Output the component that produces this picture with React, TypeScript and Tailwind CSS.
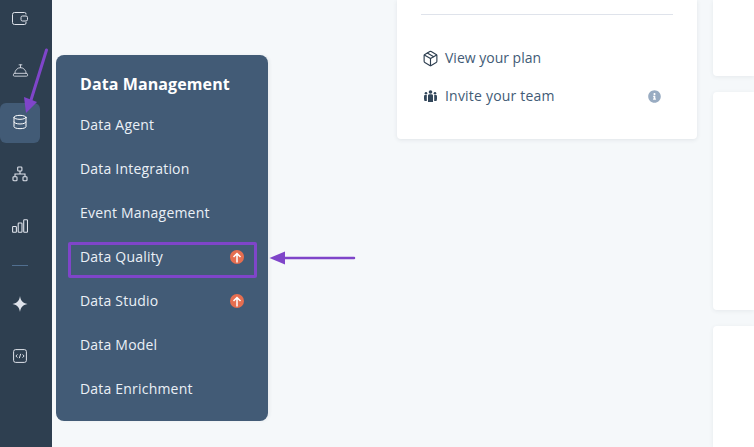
import { ConciergeBell, Database, Package } from "lucide-react";
import { FaInfoCircle } from "react-icons/fa";
import type { ReactNode } from "react";

const menuItems = [
  { label: "Data Agent" },
  { label: "Data Integration" },
  { label: "Event Management" },
  { label: "Data Quality", upgrade: true, highlighted: true },
  { label: "Data Studio", upgrade: true },
  { label: "Data Model" },
  { label: "Data Enrichment" },
];

function WalletIcon() {
  return (
    <svg width="16" height="13" viewBox="0 0 16 13" fill="none" stroke="currentColor" strokeWidth="1">
      <path d="M14 2.500V2A1.500 1.500 0 0 0 12.500.5h-10A2 2 0 0 0 .5 2.500v8a2 2 0 0 0 2 2h10A1.500 1.500 0 0 0 14 11v-1" />
      <rect x="9" y="4" width="6.500" height="5" rx="1.500" />
    </svg>
  );
}

function OrgIcon() {
  return (
    <svg width="16" height="16" viewBox="0 0 16 16" fill="none" stroke="currentColor" strokeWidth="1.100">
      <rect x="5.700" y="1" width="4.200" height="4" rx="0.800" />
      <rect x="1" y="10.700" width="4" height="4" rx="0.800" />
      <rect x="11" y="10.700" width="4" height="4" rx="0.800" />
      <path d="M8 5v3M3 10.700V8h10v2.700" />
    </svg>
  );
}

function BarsIcon() {
  return (
    <svg width="16" height="14" viewBox="0 0 16 14" fill="none" stroke="currentColor" strokeWidth="1.100">
      <rect x="0.600" y="7.500" width="3.800" height="5.800" rx="0.700" />
      <rect x="6.200" y="4" width="3.800" height="9.300" rx="0.700" />
      <rect x="11.700" y="0.700" width="3.800" height="12.600" rx="0.700" />
    </svg>
  );
}

function SparkleIcon() {
  return (
    <svg width="16" height="16" viewBox="0 0 16 16" fill="currentColor">
      <path d="M8 0c.6 4.600 2.600 7 7.500 8-4.900 1-6.900 3.400-7.500 8-.6-4.600-2.600-7-7.500-8C5.400 7 7.400 4.600 8 0z" />
    </svg>
  );
}

function CodeIcon() {
  return (
    <svg width="14" height="14" viewBox="0 0 14 14" fill="none" stroke="currentColor">
      <rect x="0.600" y="0.600" width="12.800" height="12.800" rx="2" strokeWidth="1" />
      <path d="M4.400 5.400 2.900 7l1.500 1.600M9.600 5.400 11.100 7 9.600 8.600M7.700 4.800 6.300 9.200" strokeWidth="1" />
    </svg>
  );
}

function TeamIcon() {
  return (
    <svg width="15" height="12" viewBox="0 0 15 12" fill="currentColor" className="text-[#33475b]">
      <circle cx="7.500" cy="2" r="1.800" />
      <path d="M5 5.500A1.500 1.500 0 0 1 6.500 4.200h2A1.500 1.500 0 0 1 10 5.500V12H5z" />
      <circle cx="3" cy="3.300" r="1.300" />
      <path d="M1 6.200c0-.8.600-1.300 1.300-1.300h1.500V11H1.500L1 9z" />
      <circle cx="12" cy="3.300" r="1.300" />
      <path d="M14 6.200c0-.8-.6-1.300-1.300-1.300h-1.500V11h2.300l.5-2z" />
    </svg>
  );
}

function RailItem({ children, active }: { children: ReactNode; active?: boolean }) {
  return (
    <div
      className={
        active
          ? "flex h-10 w-10 items-center justify-center rounded-md bg-[#425b76] pb-0.5 text-white"
          : "flex h-10 w-10 items-center justify-center pb-0.5 text-[#dfe3eb]"
      }
    >
      {children}
    </div>
  );
}

function UpgradeBadge() {
  return (
    <span className="flex h-3.5 w-3.5 items-center justify-center rounded-full bg-[#e66e50] text-white">
      <svg width="10" height="11" viewBox="0 0 10 11" fill="none" stroke="currentColor" strokeWidth="1.500">
        <path d="M5 10.500V1.500M1.500 5 5 1.500 8.500 5" />
      </svg>
    </span>
  );
}

export default function App() {
  return (
    <div className="relative flex h-[447px] w-[754px] overflow-hidden bg-[#f5f8fa] font-['Open_Sans',sans-serif]">
      <aside className="flex w-[52px] shrink-0 flex-col bg-[#2e3f50]">
        <div className="-mt-px flex flex-col gap-3">
          <RailItem><WalletIcon /></RailItem>
          <RailItem><ConciergeBell size={17} strokeWidth={1.200} /></RailItem>
          <RailItem active><Database size={16} strokeWidth={1.500} /></RailItem>
          <RailItem><OrgIcon /></RailItem>
          <RailItem><BarsIcon /></RailItem>
        </div>
        <div className="mb-[19px] ml-3 mt-[18px] h-px w-4 bg-[#516f90]" />
        <div className="flex flex-col gap-3">
          <RailItem><SparkleIcon /></RailItem>
          <RailItem><CodeIcon /></RailItem>
        </div>
      </aside>

      <main className="flex flex-1 justify-end gap-4">
        <section className="h-[139px] w-[300px] rounded-b bg-white px-6 pt-3.5 shadow-[0_1px_4px_rgba(45,62,80,0.1)]">
          <div className="h-px bg-[#dfe3eb]" />
          <div className="mt-[33px] flex h-5 items-center text-sm text-[#425b76]">
            <span className="flex w-6 justify-center pr-1.5 pl-px text-[#2e3f50]">
              <Package size={17} strokeWidth={1.600} className="shrink-0" />
            </span>
            View your plan
          </div>
          <div className="mt-[18px] flex h-5 items-center text-sm tracking-[0.2px] text-[#425b76]">
            <span className="flex w-6 justify-center pr-1.5 pl-px">
              <TeamIcon />
            </span>
            Invite your team
            <FaInfoCircle size={13} className="ml-auto mr-3 text-[#99acc2]" />
          </div>
        </section>
        <div className="flex w-[41px] flex-col gap-4">
          <div className="h-[76px] rounded-bl bg-white shadow-[0_1px_4px_rgba(45,62,80,0.08)]" />
          <div className="h-[218px] rounded-l bg-white shadow-[0_1px_4px_rgba(45,62,80,0.08)]" />
          <div className="h-[121px] rounded-tl bg-white shadow-[0_1px_4px_rgba(45,62,80,0.08)]" />
        </div>
      </main>

      {/* flyout menu */}
      <div className="absolute left-14 top-[55px] h-[366px] w-[212px] rounded-lg bg-[#425b76] pt-[18px] shadow-[2px_0_3px_rgba(45,62,80,0.06)]">
        <h2 className="mb-2 pl-6 text-base leading-[22px] font-bold tracking-[0.1px] text-white">Data Management</h2>
        {menuItems.map((item) => (
          <div key={item.label} className="relative ml-3 mr-[11px] flex h-11 items-center justify-between pl-3 pr-[13px] text-sm tracking-[0.2px] text-[#eaf0f6]">
            {item.label}
            {item.upgrade && <UpgradeBadge />}
            {item.highlighted && (
              <div className="absolute left-0 right-0 top-[7px] h-9 rounded-[2px] border-[3px] border-[#7f45c9]" />
            )}
          </div>
        ))}
      </div>

      {/* annotation arrows */}
      <svg className="absolute left-5 top-12" width="30" height="68" viewBox="0 0 30 68" fill="#7f45c9">
        <path d="M26.500 2 11 52" stroke="#7f45c9" strokeWidth="3" strokeLinecap="round" />
        <path d="M4 49 17 54 6 65z" />
      </svg>
      <svg className="absolute left-[268px] top-[250px]" width="90" height="16" viewBox="0 0 90 16" fill="#7f45c9">
        <path d="M14 8h72" stroke="#7f45c9" strokeWidth="2.500" strokeLinecap="round" />
        <path d="M1.500 8 17 1.500v13z" />
      </svg>
    </div>
  );
}
